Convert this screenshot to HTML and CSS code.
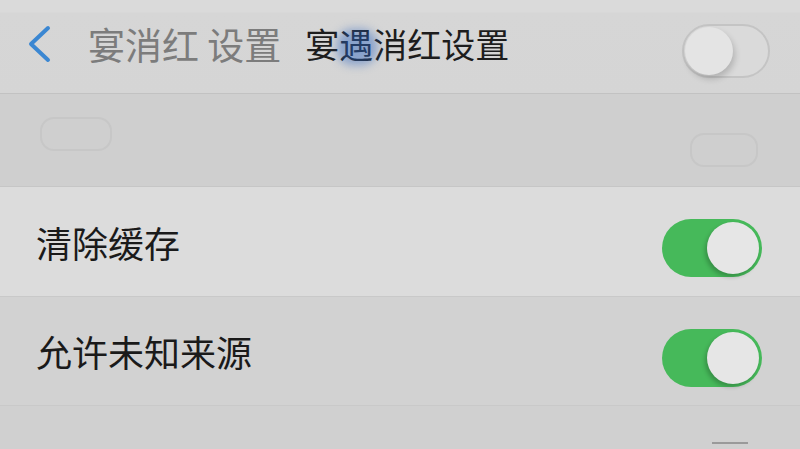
FILE: index.html
```html
<!DOCTYPE html>
<html lang="zh-CN">
<head>
    <meta charset="UTF-8">
    <meta name="viewport" content="width=device-width, initial-scale=1.0">
    <title>宴遇消红设置</title>
    <link rel="stylesheet" href="styles.css">
</head>
<body>

<div class="screen">
    <!-- Cabecera con botón atrás y título -->
    <header class="topbar">
        <svg class="back" width="26" height="38" viewBox="0 0 26 38">
            <path d="M22 3 L5 19 L22 35" fill="none" stroke="#3b87d2" stroke-width="4" stroke-linecap="round" stroke-linejoin="round"/>
        </svg>
        <span class="crumb">宴消红&nbsp;设置</span>
        <span class="title">宴遇消红设置<i class="smudge"></i></span>
        <span class="switch off"><span class="knob"></span></span>
    </header>

    <!-- Bloque vacío -->
    <div class="blank">
        <span class="ghost left"></span>
        <span class="ghost right"></span>
    </div>

    <!-- Opciones -->
    <div class="row light">
        <span class="label">清除缓存</span>
        <span class="switch on"><span class="knob"></span></span>
    </div>
    <div class="row">
        <span class="label">允许未知来源</span>
        <span class="switch on"><span class="knob"></span></span>
    </div>

    <div class="footer">
        <span class="dash"></span>
    </div>
</div>

</body>
</html>
```

FILE: styles.css
```css
/* Estilos principales */
body {
    margin: 0;
    padding: 0;
    background: #d2d2d2;
    font-family: "Noto Sans CJK SC", "Noto Sans", sans-serif;
    overflow: hidden;
}
.screen {
    width: 800px;
    height: 449px;
    display: flex;
    flex-direction: column;
    overflow: hidden;
}
.topbar {
    height: 94px;
    flex: none;
    display: flex;
    align-items: center;
    padding: 0 30px 6px 26px;
    background: linear-gradient(#dadada 0, #dadada 12px, #d6d6d6 13px, #d5d5d5);
    border-bottom: 1px solid #c2c2c2;
    box-sizing: border-box;
}
.back {
    flex: none;
}
.crumb {
    margin-left: 36px;
    font-size: 37px;
    color: #7c7c7c;
}
.title {
    position: relative;
    margin-left: 24px;
    font-size: 34px;
    color: #1d1d1d;
    flex: 1;
}
.smudge {
    position: absolute;
    left: 32px;
    top: 10px;
    width: 40px;
    height: 36px;
    background: rgba(45, 100, 190, 0.45);
    filter: blur(5px);
    border-radius: 40%;
}
.blank {
    height: 92px;
    flex: none;
    display: flex;
    align-items: center;
    justify-content: space-between;
    padding: 0 42px 0 40px;
    background: #cfcfcf;
    border-bottom: 1px solid #c6c6c6;
}
.ghost {
    height: 30px;
    border: 2px solid #c7c7c7;
    border-radius: 14px;
}
.ghost.left {
    width: 68px;
    margin-top: -12px;
}
.ghost.right {
    width: 64px;
    margin-top: 20px;
}
.row {
    height: 108px;
    flex: none;
    display: flex;
    align-items: center;
    justify-content: space-between;
    padding: 0 38px 0 36px;
    background: #d2d2d2;
    border-bottom: 1px solid #c9c9c9;
}
.row.light {
    background: #dcdcdc;
    height: 109px;
}
.label {
    font-size: 36px;
    color: #1a1a1a;
}
.switch {
    display: flex;
    align-items: center;
    box-sizing: border-box;
    border-radius: 40px;
}
.switch.off {
    width: 88px;
    height: 54px;
    border: 2px solid #c4c4c4;
    background: #dadada;
    padding-left: 1px;
    margin-top: 14px;
}
.switch.off .knob {
    width: 48px;
    height: 48px;
    border-radius: 50%;
    background: #e4e4e4;
    box-shadow: 2px 4px 6px rgba(0, 0, 0, 0.18);
}
.switch.on {
    width: 100px;
    height: 58px;
    background: #46b95a;
    justify-content: flex-end;
    padding-right: 3px;
    margin-top: 13px;
}
.switch.on .knob {
    width: 52px;
    height: 52px;
    border-radius: 50%;
    background: #e6e6e6;
    box-shadow: -2px 3px 4px rgba(0, 0, 0, 0.22);
}
.footer {
    flex: 1;
    position: relative;
    background: #d0d0d0;
}
.dash {
    position: absolute;
    left: 712px;
    top: 36px;
    width: 36px;
    height: 2px;
    background: #9a9a9a;
}
```
